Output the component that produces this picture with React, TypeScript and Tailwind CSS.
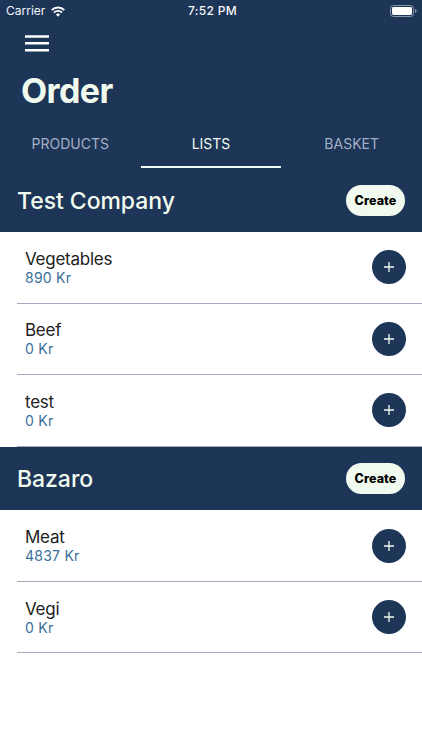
import React from "react";

type Item = { name: string; price: string };
type Group = { title: string; items: Item[]; height: string; titleClass: string };

const groups: Group[] = [
  {
    title: "Test Company",
    height: "h-16",
    titleClass: "tracking-[-0.050px]",
    items: [
      { name: "Vegetables", price: "890 Kr" },
      { name: "Beef", price: "0 Kr" },
      { name: "test", price: "0 Kr" },
    ],
  },
  {
    title: "Bazaro",
    height: "h-[63.500px]",
    titleClass: "tracking-[-0.050px]",
    items: [
      { name: "Meat", price: "4837 Kr" },
      { name: "Vegi", price: "0 Kr" },
    ],
  },
];

function StatusBar() {
  return (
    <div className="grid h-[22px] grid-cols-3 items-center pl-[6px] pr-[5px] text-[12px] leading-[22px] text-[#f4f7fa]">
      <div className="flex items-center gap-[6px]">
        <span>Carrier</span>
        <svg width="14" height="11" viewBox="0 0 14 11" fill="none" stroke="#fff">
          <path d="M0.7 4.100a8.900 8.900 0 0 1 12.600 0" strokeWidth="2" />
          <path d="M3 6.600a5.600 5.600 0 0 1 8 0" strokeWidth="1.900" />
          <path d="M7 10.7L4.9 8.5a3 3 0 0 1 4.2 0z" fill="#fff" stroke="none" />
        </svg>
      </div>
      <span className="pl-[2px] text-center font-medium tracking-[0.3px]">7:52 PM</span>
      <svg className="justify-self-end" width="27" height="12" viewBox="0 0 27 12">
        <rect x="0.5" y="0.5" width="23" height="11" rx="2.8" fill="none" stroke="#8797ab" />
        <rect x="2" y="2" width="20" height="8" rx="1.4" fill="#fff" />
        <path d="M25 4v4c1-.4 1.5-1.100 1.500-2s-.5-1.600-1.500-2z" fill="#8797ab" />
      </svg>
    </div>
  );
}

function ListRow({ name, price }: Item) {
  return (
    <li className="ml-[17px] flex h-[71.600px] items-center justify-between border-b border-[#a5abbd] pl-2 pr-[16.500px]">
      <div className="pt-[2px]">
        <div className="text-[17px] leading-[19px] tracking-[-0.250px] text-[#222]">{name}</div>
        <div className="text-[14px] leading-[18px] tracking-[0.250px] text-[#396f9a]">{price}</div>
      </div>
      <button className="flex size-[34px] items-center justify-center rounded-full bg-[#1d3557]">
        <svg width="12" height="12" viewBox="0 0 12 12" stroke="#f1faee" strokeWidth="1.300">
          <path d="M6 1v10M1 6h10" />
        </svg>
      </button>
    </li>
  );
}

export default function App() {
  return (
    <div className="flex h-[750px] w-[422px] flex-col overflow-hidden bg-white font-['Inter',sans-serif]">
      <header className="h-[168px] bg-[#1d3557]">
        <StatusBar />
        <button className="ml-[25px] mt-[13px] block h-[17px] w-6">
          <svg width="24" height="17" viewBox="0 0 24 17" stroke="#fff" strokeWidth="2.500">
            <path d="M0 1.500h24M0 8.300h24M0 15.200h24" />
          </svg>
        </button>
        <h1 className="ml-[21px] mt-[19px] text-[34px] leading-[40px] font-bold tracking-[-0.600px] text-[#f1faee]">Order</h1>
        <nav className="mt-[7px] grid h-[50px] grid-cols-3 text-center text-[14px] leading-[51px] text-[#a4b0c6]">
          <span>PRODUCTS</span>
          <span className="h-[50px] border-b-2 border-[#f1faee] text-[#f1faee]">LISTS</span>
          <span>BASKET</span>
        </nav>
      </header>
      {groups.map((g) => (
        <section key={g.title}>
          <div className={"flex items-center justify-between bg-[#1d3557] px-[17px] " + g.height}>
            <h2 className={"pt-px text-[23px] leading-[30px] font-medium text-[#f1faee] " + g.titleClass}>{g.title}</h2>
            <button className="h-[31px] w-[59px] rounded-full bg-[#f1faee] pt-[2px] text-[12.500px] font-extrabold tracking-[0.100px] text-black">Create</button>
          </div>
          <ul>
            {g.items.map((item) => (
              <ListRow key={item.name} {...item} />
            ))}
          </ul>
        </section>
      ))}
    </div>
  );
}
